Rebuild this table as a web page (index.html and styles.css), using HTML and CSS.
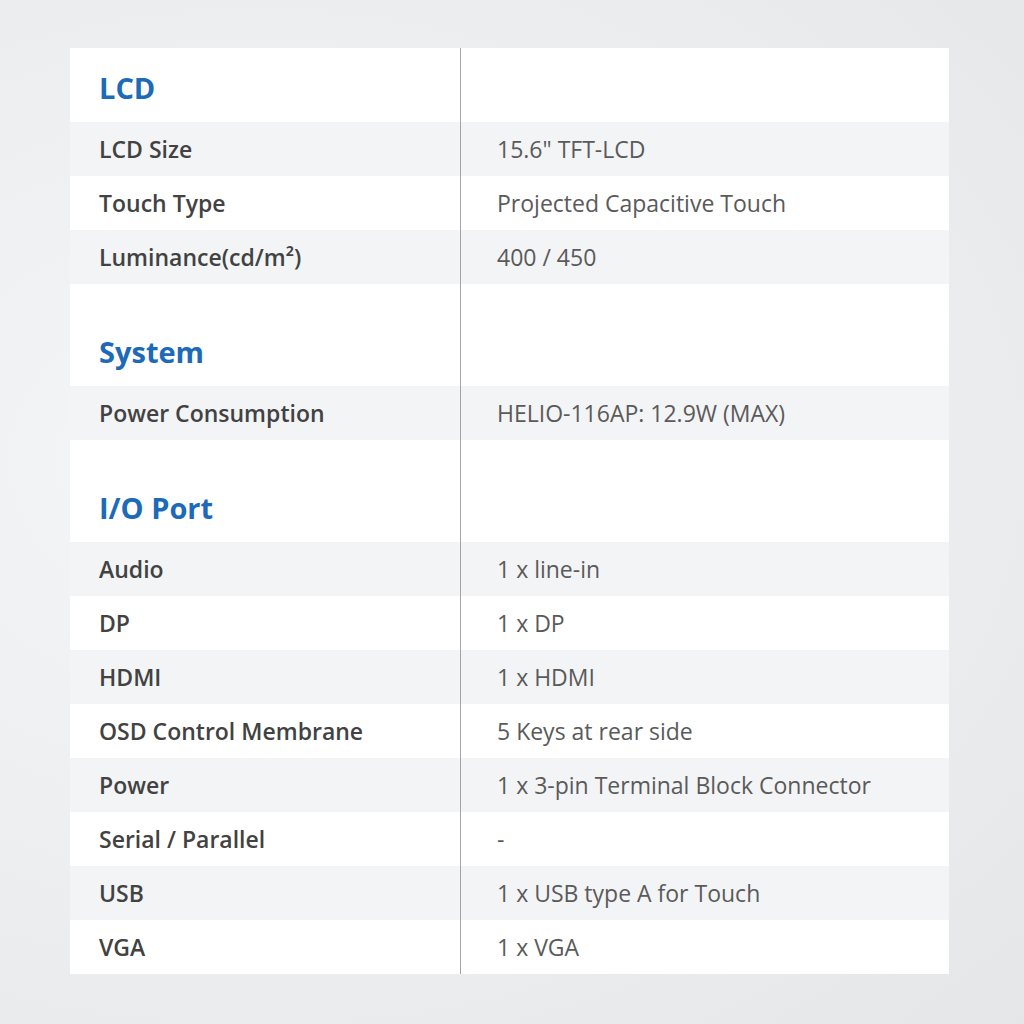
FILE: index.html
```html
<!DOCTYPE html>
<html>
<head>
<meta charset="utf-8">
<link rel="stylesheet" href="styles.css">
</head>
<body>
<div class="page">
  <div class="card">
    <section class="section first">
      <div class="row head"><div class="key"><h2>LCD</h2></div><div class="val"></div></div>
      <div class="row data"><div class="key">LCD Size</div><div class="val">15.6" TFT-LCD</div></div>
      <div class="row data"><div class="key">Touch Type</div><div class="val">Projected Capacitive Touch</div></div>
      <div class="row data"><div class="key">Luminance(cd/m²)</div><div class="val">400 / 450</div></div>
    </section>
    <section class="section">
      <div class="row head"><div class="key"><h2>System</h2></div><div class="val"></div></div>
      <div class="row data"><div class="key">Power Consumption</div><div class="val">HELIO-116AP: 12.9W (MAX)</div></div>
    </section>
    <section class="section">
      <div class="row head"><div class="key"><h2>I/O Port</h2></div><div class="val"></div></div>
      <div class="row data"><div class="key">Audio</div><div class="val">1 x line-in</div></div>
      <div class="row data"><div class="key">DP</div><div class="val">1 x DP</div></div>
      <div class="row data"><div class="key">HDMI</div><div class="val">1 x HDMI</div></div>
      <div class="row data"><div class="key">OSD Control Membrane</div><div class="val">5 Keys at rear side</div></div>
      <div class="row data"><div class="key">Power</div><div class="val">1 x 3-pin Terminal Block Connector</div></div>
      <div class="row data"><div class="key">Serial / Parallel</div><div class="val">-</div></div>
      <div class="row data"><div class="key">USB</div><div class="val">1 x USB type A for Touch</div></div>
      <div class="row data"><div class="key">VGA</div><div class="val">1 x VGA</div></div>
    </section>
  </div>
</div>
</body>
</html>
```
FILE: styles.css
```css
html, body {
  margin: 0;
  padding: 0;
}
body {
  width: 1024px;
  height: 1024px;
  background: radial-gradient(ellipse at 25% 45%, #f5f6f8 0%, #eceef0 55%, #e5e6e8 100%);
  font-family: "Open Sans", "DejaVu Sans", sans-serif;
}
.page {
  padding: 48px 75px 50px 70px;
}
.card {
  width: 879px;
  background: #ffffff;
}
.row {
  display: grid;
  grid-template-columns: 391px 1fr;
}
.key {
  border-right: 1px solid #a4a4a4;
  padding-left: 29px;
  color: #424242;
  font-weight: 600;
}
.val {
  padding-left: 36px;
  color: #5a5a5a;
  font-weight: 400;
}
.data {
  height: 54px;
  font-size: 23px;
}
.data .key, .data .val {
  display: flex;
  align-items: center;
}
.section .data:nth-child(even) {
  background: #f3f4f6;
}
.head {
  height: 102px;
}
.first .head {
  height: 74px;
}
.head .key {
  display: flex;
  align-items: flex-end;
}
h2 {
  margin: 0 0 14px 0;
  font-size: 29px;
  line-height: 40px;
  font-weight: 700;
  color: #1c6ab8;
}
```
